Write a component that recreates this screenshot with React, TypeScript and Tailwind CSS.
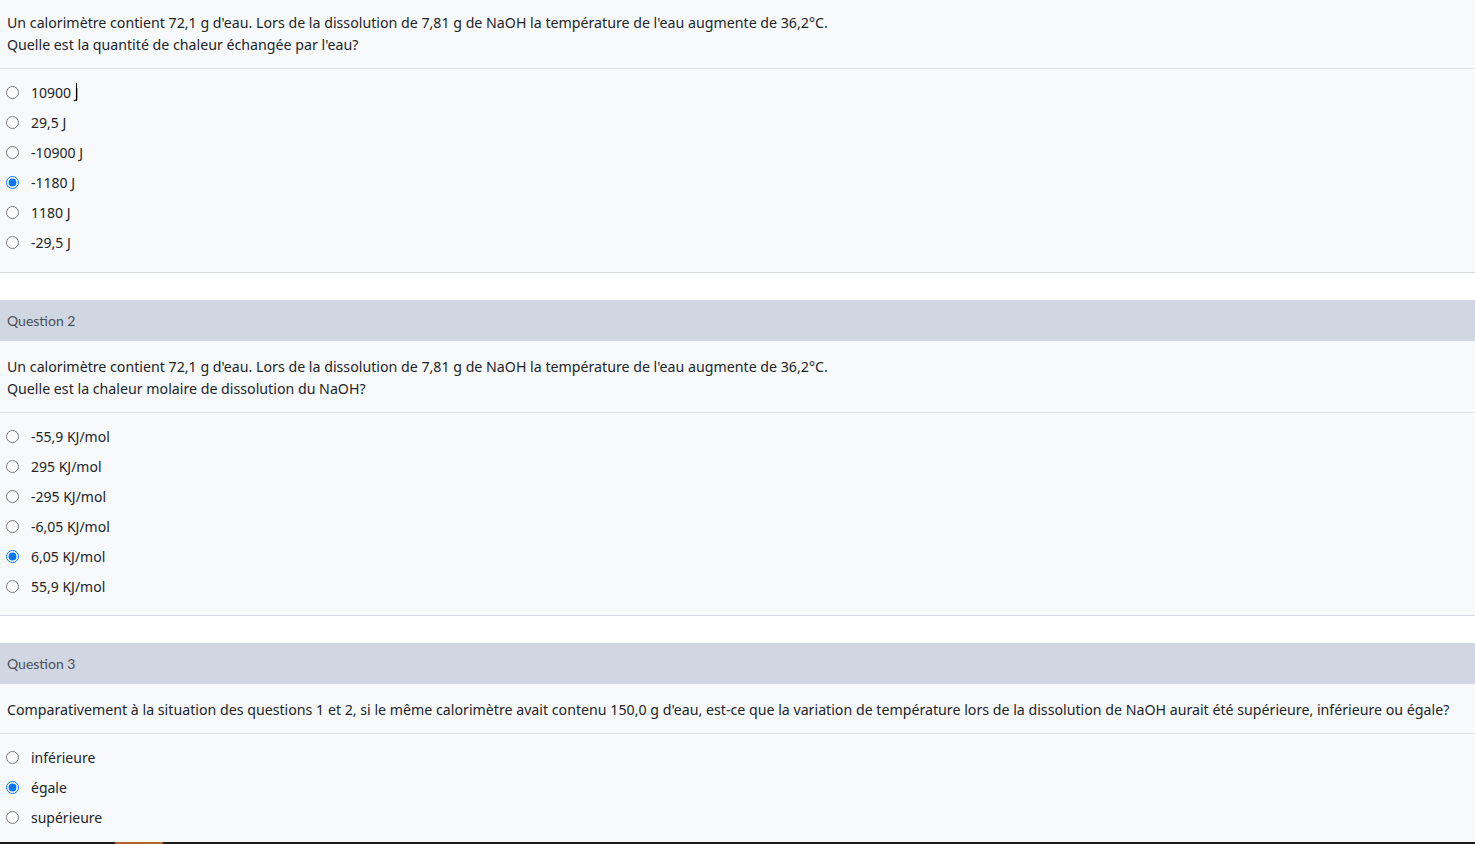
const questions = [
  {
    id: 1,
    title: null as string | null,
    lines: [
      "Un calorimètre contient 72,1 g d'eau. Lors de la dissolution de 7,81 g de NaOH la température de l'eau augmente de 36,2°C.",
      "Quelle est la quantité de chaleur échangée par l'eau?",
    ],
    options: ["10900 J", "29,5 J", "-10900 J", "-1180 J", "1180 J", "-29,5 J"],
    checked: 3,
  },
  {
    id: 2,
    title: "Question 2",
    lines: [
      "Un calorimètre contient 72,1 g d'eau. Lors de la dissolution de 7,81 g de NaOH la température de l'eau augmente de 36,2°C.",
      "Quelle est la chaleur molaire de dissolution du NaOH?",
    ],
    options: ["-55,9 KJ/mol", "295 KJ/mol", "-295 KJ/mol", "-6,05 KJ/mol", "6,05 KJ/mol", "55,9 KJ/mol"],
    checked: 4,
  },
  {
    id: 3,
    title: "Question 3",
    lines: [
      "Comparativement à la situation des questions 1 et 2, si le même calorimètre avait contenu 150,0 g d'eau, est-ce que la variation de température lors de la dissolution de NaOH aurait été supérieure, inférieure ou égale?",
    ],
    options: ["inférieure", "égale", "supérieure"],
    checked: 1,
  },
];

function Question({ q, first }: { q: (typeof questions)[number]; first: boolean }) {
  return (
    <section className={first ? "" : "mt-[27px]"}>
      {q.title && (
        <div className="flex h-[41px] items-center bg-[#d0d6e2] px-[7px] font-['Lato'] text-[14px] text-[#4b515c]">
          {q.title}
        </div>
      )}
      <div className="bg-[#f8f9fb]">
        <div
          className={`border-b border-[#e0e2e6] px-[7px] pb-[12px] text-[14.2px] leading-[22px] whitespace-nowrap text-[#212529] ${
            first ? "pt-[12px]" : "pt-[15px]"
          }`}
        >
          {q.lines.map((line) => (
            <div key={line}>{line}</div>
          ))}
        </div>
        <div className={`border-b border-[#d5d9e3] pt-[8px] ${first ? "pb-[15px]" : "pb-[14px]"}`}>
          {q.options.map((opt, i) => (
            <label key={opt} className="flex h-[30px] items-center gap-[12px] pl-[6px] text-[14px] text-[#212529]">
              <input type="radio" name={`q${q.id}`} defaultChecked={i === q.checked} className="m-0 h-[13px] w-[13px]" />
              <span className="flex items-center">
                {opt}
                {q.id === 1 && i === 0 && <span className="ml-[-3px] inline-block h-[18px] w-px bg-black" />}
              </span>
            </label>
          ))}
        </div>
      </div>
    </section>
  );
}

export default function App() {
  return (
    <div className="flex h-[844px] flex-col overflow-hidden bg-white font-['Noto_Sans',sans-serif]">
      <div className="min-h-0 flex-1 overflow-hidden">
        {questions.map((q, i) => (
          <Question key={q.id} q={q} first={i === 0} />
        ))}
      </div>
      <div className="flex h-[2px] shrink-0 bg-[#1c1c1c]">
        <div className="ml-[115px] w-[48px] bg-[#b0652a]" />
      </div>
    </div>
  );
}
